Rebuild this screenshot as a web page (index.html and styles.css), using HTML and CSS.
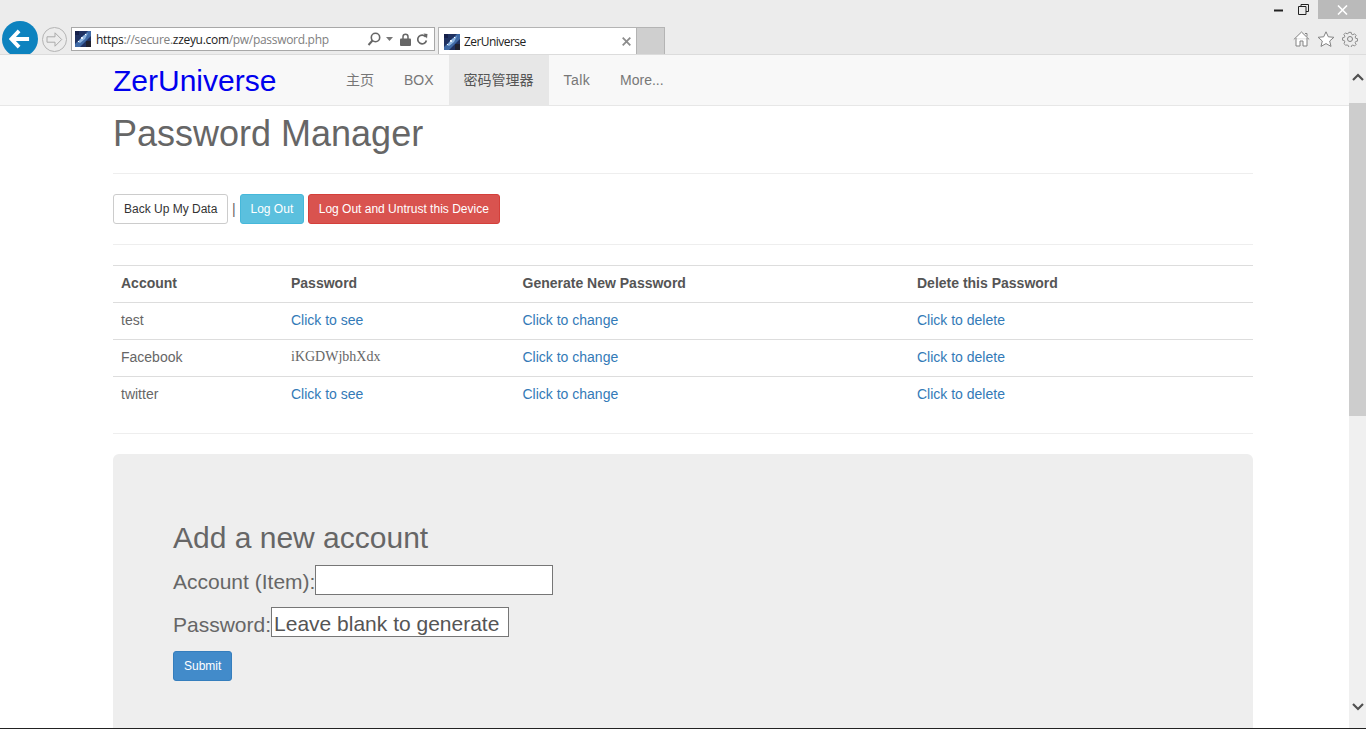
FILE: index.html
```html
<!DOCTYPE html>
<html lang="en">
<head>
    <meta charset="UTF-8">
    <meta name="viewport" content="width=device-width, initial-scale=1.0">
    <title>ZerUniverse</title>
    <link rel="stylesheet" href="styles.css">
</head>
<body>
<div class="window">
    <!-- browser chrome -->
    <header class="chrome">
        <div class="title-row">
            <svg class="win-min" width="9" height="3" viewBox="0 0 9 3"><rect width="9" height="2" y="0.5" fill="#222"/></svg>
            <svg class="win-restore" width="11" height="11" viewBox="0 0 11 11"><path d="M3 2.5V.5h7.500v7H8M.5 2.500h7.500v8H.5z" fill="none" stroke="#222"/></svg>
            <div class="win-close">
                <svg width="11" height="10" viewBox="0 0 11 10"><path d="M1 .5l9 9M10 .5l-9 9" stroke="#fff" stroke-width="1.600"/></svg>
            </div>
        </div>
        <div class="tool-row">
            <div class="back-btn">
                <svg width="22" height="20" viewBox="0 0 24 22"><path d="M11 2L2.500 11l8.500 9M3 11h19" fill="none" stroke="#fff" stroke-width="4.200"/></svg>
            </div>
            <div class="fwd-btn">
                <svg width="17" height="15" viewBox="0 0 17 15"><path d="M9 .8l6.700 6.700L9 14.200v-4H1V4.800h8z" fill="none" stroke="#aaa"/></svg>
            </div>
            <div class="address">
                <svg class="favicon" width="16" height="16" viewBox="0 0 16 16">
                    <rect width="16" height="16" fill="#1f3160"/>
                    <path d="M0 13L13 0h3v5L5 16H0z" fill="#3f6aa6"/>
                    <path d="M3 11l5-6 5-3-3 6-5 4z" fill="#8fb6e0"/>
                    <rect x="6" y="6" width="2" height="2" fill="#e6f0fb"/>
                    <rect x="10" y="3" width="1" height="1" fill="#fff"/>
                    <rect x="3" y="10" width="1" height="1" fill="#fff"/>
                    <rect x="11" y="10" width="5" height="6" fill="#20222f"/>
                    <rect x="0" y="0" width="4" height="4" fill="#15204a"/>
                </svg>
                <span class="url"><span class="url-dark">https</span>://secure.<span class="url-dark">zzeyu.com</span>/pw/password.php</span>
                <div class="addr-icons">
                    <svg width="14" height="14" viewBox="0 0 14 14"><circle cx="8.500" cy="5.500" r="4.200" fill="none" stroke="#666" stroke-width="1.600"/><path d="M5.500 8.500L1.500 13" stroke="#666" stroke-width="2"/></svg>
                    <svg class="addr-caret" width="7" height="4" viewBox="0 0 7 4"><path d="M0 0h7L3.500 4z" fill="#777"/></svg>
                    <svg class="addr-lock" width="11" height="13" viewBox="0 0 11 13"><path d="M3 6V3.800a2.500 2.500 0 0 1 5 0V6" fill="none" stroke="#666" stroke-width="1.500"/><rect y="5.500" width="11" height="7.500" rx="1" fill="#666"/></svg>
                    <svg class="addr-reload" width="12" height="13" viewBox="0 0 12 13"><path d="M9.800 4a4.400 4.400 0 1 0 .6 3.500" fill="none" stroke="#666" stroke-width="1.700"/><path d="M7.500 .5l4 .5-.5 4.500z" fill="#666"/></svg>
                </div>
            </div>
            <div class="tab">
                <svg class="favicon" width="16" height="16" viewBox="0 0 16 16">
                    <rect width="16" height="16" fill="#1f3160"/>
                    <path d="M0 13L13 0h3v5L5 16H0z" fill="#3f6aa6"/>
                    <path d="M3 11l5-6 5-3-3 6-5 4z" fill="#8fb6e0"/>
                    <rect x="6" y="6" width="2" height="2" fill="#e6f0fb"/>
                    <rect x="10" y="3" width="1" height="1" fill="#fff"/>
                    <rect x="3" y="10" width="1" height="1" fill="#fff"/>
                    <rect x="11" y="10" width="5" height="6" fill="#20222f"/>
                    <rect x="0" y="0" width="4" height="4" fill="#15204a"/>
                </svg>
                <span class="tab-title">ZerUniverse</span>
                <svg class="tab-close" width="9" height="9" viewBox="0 0 9 9"><path d="M.7.7l7.600 7.600M8.300.7L.7 8.300" stroke="#8c8c8c" stroke-width="1.800"/></svg>
            </div>
            <div class="new-tab"></div>
            <div class="tool-icons">
                <svg width="17" height="16" viewBox="0 0 17 16"><path d="M.8 8.500L8.500 1l7.700 7.500M3 7v8h4v-5h3v5h4V7M12 2.500h2v3" fill="#fff" stroke="#828282"/></svg>
                <svg width="18" height="16" viewBox="0 0 18 16"><path d="M9 .8l2.300 5 5.600.5-4.200 3.700 1.300 5.400L9 12.600l-5 2.800 1.300-5.400L1.100 6.300l5.600-.5z" fill="#fff" stroke="#828282"/></svg>
                <svg width="16" height="16" viewBox="0 0 16 16"><circle cx="8" cy="8" r="2.500" fill="none" stroke="#828282"/><path d="M6.700.6h2.600l.4 2 1.500.7 1.800-1.100 1.800 1.800-1.100 1.800.7 1.500 2 .4v2.600l-2 .4-.7 1.500 1.100 1.800-1.800 1.800-1.800-1.100-1.500.7-.4 2H6.700l-.4-2-1.500-.7L3 14.800 1.200 13l1.100-1.800-.7-1.500-2-.4V6.700l2-.4.7-1.500L1.200 3 3 1.200l1.800 1.100 1.500-.7z" fill="none" stroke="#828282" transform="translate(.8 .8) scale(.9)"/></svg>
            </div>
        </div>
    </header>

    <div class="viewport">
        <main class="page">
            <nav class="navbar">
                <div class="container nav-inner">
                    <a class="brand">ZerUniverse</a>
                    <ul class="nav-links">
                        <li>主页</li>
                        <li>BOX</li>
                        <li class="active">密码管理器</li>
                        <li class="nav-talk">Talk</li>
                        <li>More...</li>
                    </ul>
                </div>
            </nav>

            <div class="container">
                <h1 class="page-title">Password Manager</h1>
                <hr>
                <div class="actions">
                    <a class="btn btn-default">Back Up My Data</a>
                    <span class="sep">|</span>
                    <a class="btn btn-info">Log Out</a>
                    <a class="btn btn-danger">Log Out and Untrust this Device</a>
                </div>
                <hr>
                <table class="pw-table">
                    <thead>
                        <tr>
                            <th class="col-account">Account</th>
                            <th class="col-password">Password</th>
                            <th class="col-generate">Generate New Password</th>
                            <th>Delete this Password</th>
                        </tr>
                    </thead>
                    <tbody>
                        <tr>
                            <td>test</td>
                            <td><a>Click to see</a></td>
                            <td><a>Click to change</a></td>
                            <td><a>Click to delete</a></td>
                        </tr>
                        <tr>
                            <td>Facebook</td>
                            <td class="revealed">iKGDWjbhXdx</td>
                            <td><a>Click to change</a></td>
                            <td><a>Click to delete</a></td>
                        </tr>
                        <tr>
                            <td>twitter</td>
                            <td><a>Click to see</a></td>
                            <td><a>Click to change</a></td>
                            <td><a>Click to delete</a></td>
                        </tr>
                    </tbody>
                </table>
                <hr>
                <section class="jumbotron">
                    <h2>Add a new account</h2>
                    <form>
                        <div class="field">
                            <label for="item">Account (Item):</label><input id="item" type="text">
                        </div>
                        <div class="field">
                            <label for="pass">Password:</label><input id="pass" type="text" placeholder="Leave blank to generate">
                        </div>
                        <a class="btn btn-primary">Submit</a>
                    </form>
                </section>
            </div>
        </main>

        <div class="scrollbar">
            <div class="scroll-btn">
                <svg width="12" height="8" viewBox="0 0 12 8"><path d="M1 7l5-5 5 5" fill="none" stroke="#505050" stroke-width="2.200"/></svg>
            </div>
            <div class="scroll-track"><div class="scroll-thumb"></div></div>
            <div class="scroll-btn scroll-down">
                <svg width="12" height="8" viewBox="0 0 12 8"><path d="M1 1l5 5 5-5" fill="none" stroke="#505050" stroke-width="2.200"/></svg>
            </div>
        </div>
    </div>
</div>
</body>
</html>
```

FILE: styles.css
```css
* {
    box-sizing: border-box;
}
html, body {
    margin: 0;
    height: 100%;
    overflow: hidden;
}
body {
    font-family: "Liberation Sans", "Noto Sans CJK SC", sans-serif;
    font-size: 14px;
    line-height: 20px;
    color: #666;
    background: #fff;
}
.window {
    height: 729px;
    display: flex;
    flex-direction: column;
    border-bottom: 1px solid #222;
}

/* browser chrome */
.chrome {
    height: 55px;
    flex: none;
    overflow: hidden;
    background: #ececec;
    border-bottom: 1px solid #dcdcdc;
}
.title-row {
    height: 19px;
    display: flex;
    justify-content: flex-end;
    align-items: flex-start;
}
.win-min {
    margin: 9px 15px 0 0;
}
.win-restore {
    margin: 4px 9px 0 0;
}
.win-close {
    width: 48px;
    height: 19px;
    background: #bababa;
    display: flex;
    align-items: center;
    justify-content: center;
}
.tool-row {
    display: flex;
    align-items: flex-start;
    padding-left: 2px;
}
.back-btn {
    width: 36px;
    height: 36px;
    margin-top: 2px;
    border-radius: 50%;
    background: #0d83bf;
    display: flex;
    align-items: center;
    justify-content: center;
}
.fwd-btn {
    width: 25px;
    height: 25px;
    margin: 8px 0 0 4px;
    border: 1px solid #b4b4b4;
    border-radius: 50%;
    display: flex;
    align-items: center;
    justify-content: center;
}
.address {
    width: 364px;
    height: 24px;
    margin: 8px 0 0 4px;
    background: #fff;
    border: 1px solid #a8a8a8;
    display: flex;
    align-items: center;
    padding: 0 6px 0 3px;
}
.favicon {
    flex: none;
}
.url {
    margin-left: 5px;
    padding-top: 2px;
    font-family: "Open Sans", sans-serif;
    font-size: 12px;
    letter-spacing: -0.3px;
    color: #808080;
    white-space: nowrap;
}
.url-dark {
    color: #222;
}
.addr-icons {
    margin-left: auto;
    display: flex;
    align-items: center;
}
.addr-caret {
    margin-left: 5px;
}
.addr-lock {
    margin-left: 7px;
}
.addr-reload {
    margin-left: 5px;
}
.tab {
    width: 199px;
    height: 28px;
    margin: 8px 0 0 3px;
    background: #fff;
    border: 1px solid #b4b4b4;
    border-bottom: none;
    display: flex;
    align-items: center;
    padding: 0 5px 0 5px;
}
.tab-title {
    margin-left: 4px;
    font-family: "Open Sans", sans-serif;
    font-size: 12px;
    letter-spacing: -0.55px;
    color: #222;
}
.tab-close {
    margin-left: auto;
}
.new-tab {
    width: 28px;
    height: 28px;
    margin-top: 8px;
    background: #cfcfcf;
    border: 1px solid #b4b4b4;
    border-left: none;
    border-bottom: none;
}
.tool-icons {
    margin: 12px 8px 0 auto;
    display: flex;
    gap: 7px;
}

.viewport {
    flex: 1;
    min-height: 0;
    display: flex;
}
.page {
    flex: 1;
    min-width: 0;
    overflow: hidden;
}
.container {
    width: 1140px;
    margin-left: 113px;
}

/* navbar */
.navbar {
    height: 51px;
    background: #f8f8f8;
    border-bottom: 1px solid #e7e7e7;
}
.nav-inner {
    display: flex;
    height: 50px;
}
.brand {
    width: 218px;
    font-size: 30px;
    line-height: 52px;
    color: #0000ee;
}
.nav-links {
    display: flex;
    margin: 0;
    padding: 0;
    list-style: none;
}
.nav-links li {
    padding: 0 15px;
    line-height: 50px;
    color: #777;
}
.nav-links .active {
    background: #e7e7e7;
    color: #555;
}
.nav-links .nav-talk {
    letter-spacing: 0.4px;
}

/* content */
.page-title {
    margin: 8px 0 20px;
    font-size: 36px;
    font-weight: 500;
    line-height: 39px;
}
hr {
    margin: 20px 0;
    border: 0;
    border-top: 1px solid #eee;
}
.actions {
    display: flex;
    align-items: center;
    height: 30px;
}
.sep {
    margin: 0 4px 0 3.500px;
}
.btn {
    display: inline-block;
    height: 30px;
    padding: 0 10px;
    border: 1px solid transparent;
    border-radius: 3px;
    font-size: 12px;
    line-height: 28px;
}
.btn-default {
    background: #fff;
    border-color: #ccc;
    color: #333;
}
.btn-info {
    background: #5bc0de;
    border-color: #46b8da;
    color: #fff;
    padding-right: 9.500px;
    margin-right: 4px;
}
.btn-danger {
    background: #d9534f;
    border-color: #d43f3a;
    color: #fff;
}
.btn-primary {
    margin-top: 2px;
    background: #428bca;
    border-color: #357ebd;
    color: #fff;
}

.pw-table {
    width: 100%;
    border-collapse: collapse;
    table-layout: fixed;
}
.pw-table th, .pw-table td {
    padding: 7px 8px 9px;
    text-align: left;
    vertical-align: top;
}
.pw-table th {
    border-top: 1px solid #ddd;
    border-bottom: 1px solid #ddd;
    color: #555;
}
.pw-table td {
    color: #666;
}
.pw-table tbody tr + tr td {
    border-top: 1px solid #ddd;
}
.pw-table a {
    color: #337ab7;
}
.col-account {
    width: 170px;
}
.col-password {
    width: 231.500px;
}
.col-generate {
    width: 394.500px;
}
.pw-table .revealed {
    font-family: "Liberation Serif", serif;
}

.jumbotron {
    height: 400px;
    padding: 47px 60px;
    background: #eee;
    border-radius: 6px;
}
.jumbotron h2 {
    margin: 20px 0 11px;
    font-size: 30px;
    font-weight: 500;
    line-height: 33px;
}
.field {
    display: flex;
    align-items: center;
    height: 30px;
    margin-bottom: 12px;
    font-size: 21px;
}
.field label {
    padding-top: 3px;
}
.field + .field label {
    padding-top: 5px;
}
.field input {
    width: 238px;
    height: 30px;
    padding: 4px 2px 0;
    border: 1px solid #767676;
    border-radius: 0;
    background: #fff;
    font-family: inherit;
    font-size: 21px;
    color: #555;
}
.field input::placeholder {
    color: #555;
    opacity: 1;
}

/* scrollbar */
.scrollbar {
    width: 17px;
    flex: none;
    display: flex;
    flex-direction: column;
    background: #f0f0f0;
}
.scroll-btn {
    height: 44px;
    flex: none;
    display: flex;
    align-items: center;
    justify-content: center;
}
.scroll-down {
    height: 42px;
    align-items: flex-end;
    padding-bottom: 17px;
}
.scroll-track {
    flex: 1;
    padding-top: 4px;
}
.scroll-thumb {
    height: 313px;
    background: #cdcdcd;
}
```
